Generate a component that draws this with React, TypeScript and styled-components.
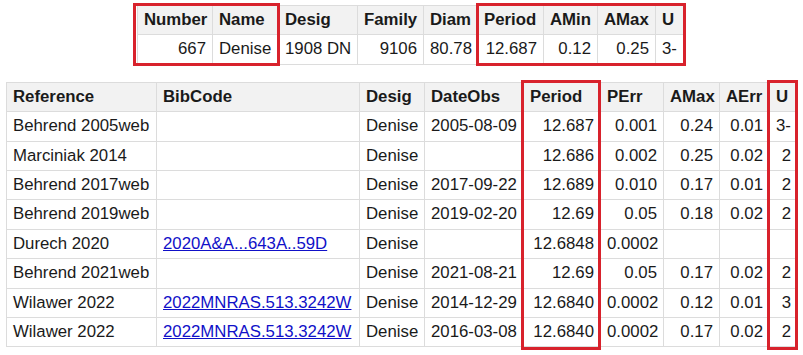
import React from 'react'
import styled, { createGlobalStyle } from 'styled-components'

const GlobalStyle = createGlobalStyle`
  body {
    margin: 0;
    background: #fff;
    font-family: 'Liberation Sans', Arial, sans-serif;
    color: #1a1a1a;
  }
`

const Page = styled.div`
  display: flex;
  flex-direction: column;
  align-items: flex-start;
  gap: 17px;
  padding: 5px 6px;
`

const Frame = styled.div<{ $offset?: number }>`
  position: relative;
  margin-left: ${(p) => p.$offset ?? 0}px;
`

const Table = styled.table<{ $width: number }>`
  border-collapse: collapse;
  table-layout: fixed;
  width: ${(p) => p.$width}px;
  font-size: 16.8px;
  line-height: 18.4px;
`

const Th = styled.th`
  background: #f2f2f2;
  border: 1px solid #dcdcdc;
  padding: 5px 6px;
  text-align: left;
  font-weight: bold;
  white-space: nowrap;
`

const Td = styled.td<{ $num?: boolean }>`
  border: 1px solid #dcdcdc;
  padding: 5px 6px;
  text-align: ${(p) => (p.$num ? 'right' : 'left')};
  white-space: nowrap;
`

const Link = styled.a`
  color: #1010c8;
  text-decoration: underline;
`

const Highlight = styled.div<{ $left: number; $width: number; $height: number }>`
  position: absolute;
  top: -2px;
  left: ${(p) => p.$left}px;
  width: ${(p) => p.$width}px;
  height: ${(p) => p.$height}px;
  border: 3px solid #d8222c;
  box-sizing: border-box;
  pointer-events: none;
`

type Col = { key: string; title: string; width: number; num?: boolean }

const summaryCols: Col[] = [
  { key: 'number', title: 'Number', width: 75, num: true },
  { key: 'name', title: 'Name', width: 66 },
  { key: 'desig', title: 'Desig', width: 79 },
  { key: 'family', title: 'Family', width: 66, num: true },
  { key: 'diam', title: 'Diam', width: 54, num: true },
  { key: 'period', title: 'Period', width: 66, num: true },
  { key: 'amin', title: 'AMin', width: 54, num: true },
  { key: 'amax', title: 'AMax', width: 58, num: true },
  { key: 'u', title: 'U', width: 29 },
]

const summaryRow: Record<string, string> = {
  number: '667',
  name: 'Denise',
  desig: '1908 DN',
  family: '9106',
  diam: '80.78',
  period: '12.687',
  amin: '0.12',
  amax: '0.25',
  u: '3-',
}

const detailCols: Col[] = [
  { key: 'ref', title: 'Reference', width: 150 },
  { key: 'bib', title: 'BibCode', width: 203 },
  { key: 'desig', title: 'Desig', width: 65 },
  { key: 'date', title: 'DateObs', width: 99 },
  { key: 'period', title: 'Period', width: 77, num: true },
  { key: 'perr', title: 'PErr', width: 63, num: true },
  { key: 'amax', title: 'AMax', width: 56, num: true },
  { key: 'aerr', title: 'AErr', width: 50, num: true },
  { key: 'u', title: 'U', width: 28, num: true },
]

type Detail = {
  ref: string
  bib?: string
  date?: string
  period: string
  perr: string
  amax?: string
  aerr?: string
  u?: string
}

const details: Detail[] = [
  { ref: 'Behrend 2005web', date: '2005-08-09', period: '12.687', perr: '0.001', amax: '0.24', aerr: '0.01', u: '3-' },
  { ref: 'Marciniak 2014', period: '12.686', perr: '0.002', amax: '0.25', aerr: '0.02', u: '2' },
  { ref: 'Behrend 2017web', date: '2017-09-22', period: '12.689', perr: '0.010', amax: '0.17', aerr: '0.01', u: '2' },
  { ref: 'Behrend 2019web', date: '2019-02-20', period: '12.69', perr: '0.05', amax: '0.18', aerr: '0.02', u: '2' },
  { ref: 'Durech 2020', bib: '2020A&A...643A..59D', period: '12.6848', perr: '0.0002' },
  { ref: 'Behrend 2021web', date: '2021-08-21', period: '12.69', perr: '0.05', amax: '0.17', aerr: '0.02', u: '2' },
  { ref: 'Wilawer 2022', bib: '2022MNRAS.513.3242W', date: '2014-12-29', period: '12.6840', perr: '0.0002', amax: '0.12', aerr: '0.01', u: '3' },
  { ref: 'Wilawer 2022', bib: '2022MNRAS.513.3242W', date: '2016-03-08', period: '12.6840', perr: '0.0002', amax: '0.17', aerr: '0.02', u: '2' },
]

const totalWidth = (cols: Col[]) => cols.reduce((s, c) => s + c.width, 0)

const ColGroup = ({ cols }: { cols: Col[] }) => (
  <colgroup>
    {cols.map((c) => (
      <col key={c.key} style={{ width: c.width }} />
    ))}
  </colgroup>
)

const HeadRow = ({ cols }: { cols: Col[] }) => (
  <thead>
    <tr>
      {cols.map((c) => (
        <Th key={c.key}>{c.title}</Th>
      ))}
    </tr>
  </thead>
)

const SummaryTable = () => (
  <Frame $offset={131}>
    <Table $width={totalWidth(summaryCols)}>
      <ColGroup cols={summaryCols} />
      <HeadRow cols={summaryCols} />
      <tbody>
        <tr>
          {summaryCols.map((c) => (
            <Td key={c.key} $num={c.num}>
              {summaryRow[c.key]}
            </Td>
          ))}
        </tr>
      </tbody>
    </Table>
    <Highlight $left={-4} $width={147} $height={63} />
    <Highlight $left={339} $width={210} $height={63} />
  </Frame>
)

const DetailTable = () => (
  <Frame>
    <Table $width={totalWidth(detailCols)}>
      <ColGroup cols={detailCols} />
      <HeadRow cols={detailCols} />
      <tbody>
        {details.map((d, i) => (
          <tr key={i}>
            <Td>{d.ref}</Td>
            <Td>{d.bib && <Link href="#">{d.bib}</Link>}</Td>
            <Td>Denise</Td>
            <Td>{d.date}</Td>
            <Td $num>{d.period}</Td>
            <Td $num>{d.perr}</Td>
            <Td $num>{d.amax}</Td>
            <Td $num>{d.aerr}</Td>
            <Td $num={d.u !== '3-'}>{d.u}</Td>
          </tr>
        ))}
      </tbody>
    </Table>
    <Highlight $left={515} $width={80} $height={270} />
    <Highlight $left={761} $width={31} $height={270} />
  </Frame>
)

const App = () => (
  <>
    <GlobalStyle />
    <Page>
      <SummaryTable />
      <DetailTable />
    </Page>
  </>
)

export default App
